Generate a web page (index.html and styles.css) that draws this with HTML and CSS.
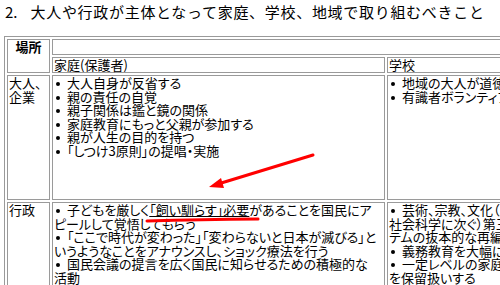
FILE: index.html
```html
<!DOCTYPE html>
<html lang="ja">
<head>
<meta charset="utf-8">
<link rel="stylesheet" href="styles.css">
</head>
<body>
<div class="page">
  <h1 class="title"><span class="num">2.</span>大人や行政が主体となって家庭、学校、地域で取り組むべきこと</h1>
  <table class="grid">
    <colgroup>
      <col class="c1"><col class="c2"><col class="c3"><col class="c4">
    </colgroup>
    <tr class="r1">
      <th rowspan="2" class="place">場所</th>
      <td colspan="3">&nbsp;</td>
    </tr>
    <tr class="r2">
      <td>家庭(保護者)</td>
      <td>学校</td>
      <td>地域</td>
    </tr>
    <tr class="r3">
      <td class="who">大人、<br>企業</td>
      <td><span class="b"></span>大人自身が反省する<br><span class="b"></span>親の責任の自覚<br><span class="b"></span>親子関係は鑑と鏡の関係<br><span class="b"></span>家庭教育にもっと父親が参加する<br><span class="b"></span>親が人生の目的を持つ<br><span class="b"></span>「しつけ3原則」の提唱・実施</td>
      <td><span class="b"></span>地域の大人が道徳教育を<br><span class="b"></span>有識者ボランティアの活用</td>
      <td></td>
    </tr>
    <tr class="r4">
      <td class="who">行政</td>
      <td><span class="b"></span>子どもを厳しく<u>「飼い馴らす」必要</u>があることを国民にア<br>ピールして覚悟してもらう<br><span class="b"></span>「ここで時代が変わった」「変わらないと日本が滅びる」と<br>いうようなことをアナウンスし、ショック療法を行う<br><span class="b"></span>国民会議の提言を広く国民に知らせるための積極的な<br>活動</td>
      <td><span class="b"></span>芸術、宗教、文化（人文科学、<br>社会科学に次ぐ）第三の教育シス<br>テムの抜本的な再編成<br><span class="b"></span>義務教育を大幅に短縮<br><span class="b"></span>一定レベルの家庭教育を受けない<br>を保留扱いする</td>
      <td></td>
    </tr>
  </table>
  <svg class="marks" width="500" height="285" viewBox="0 0 500 285">
    <line x1="313" y1="155" x2="218" y2="184" stroke="#ff0000" stroke-width="3" stroke-linecap="round"/>
    <polygon points="209,187 221,178 224,188" fill="#ff0000"/>
    <path d="M147 221 Q200 219.5 258 219" stroke="#ff0000" stroke-width="3" fill="none" stroke-linecap="round"/>
  </svg>
</div>
</body>
</html>
```
FILE: styles.css
```css
html, body {
  margin: 0;
  padding: 0;
  background: #fff;
}
.page {
  position: relative;
  width: 500px;
  height: 285px;
  overflow: hidden;
  font-family: "Noto Sans CJK JP", "Noto Sans", sans-serif;
  color: #000;
}
.title {
  margin: 0;
  padding: 3px 0 0 5px;
  font-size: 15px;
  line-height: 18px;
  font-weight: normal;
  letter-spacing: 0.7px;
  white-space: nowrap;
}
.num {
  margin-right: 13px;
  letter-spacing: 0;
}
.grid {
  margin: 15px 0 0 4px;
  border: 1px solid #9a9a9a;
  border-spacing: 2px;
  table-layout: fixed;
  width: 800px;
  font-size: 13px;
  line-height: 13.6px;
  font-feature-settings: "palt";
}
.c1 { width: 43px; }
.c2 { width: 333px; }
.c3 { width: 200px; }
.grid th, .grid td {
  border: 1px solid #9a9a9a;
  padding: 0 1px;
  vertical-align: top;
  text-align: left;
  white-space: nowrap;
  font-weight: normal;
}
.grid .place {
  text-align: center;
  font-weight: bold;
  line-height: 14px;
}
.r1 td, .r2 td {
  height: 14px;
  line-height: 14px;
}
.r3 td {
  height: 123px;
}
.r4 td {
  height: 200px;
}
.b {
  display: inline-block;
  width: 4px;
  height: 4px;
  border-radius: 50%;
  background: #000;
  margin: 0 7px 0 2px;
  vertical-align: 2px;
}
u {
  text-decoration: underline;
  text-underline-offset: 1px;
}
.marks {
  position: absolute;
  left: 0;
  top: 0;
  pointer-events: none;
}
```
